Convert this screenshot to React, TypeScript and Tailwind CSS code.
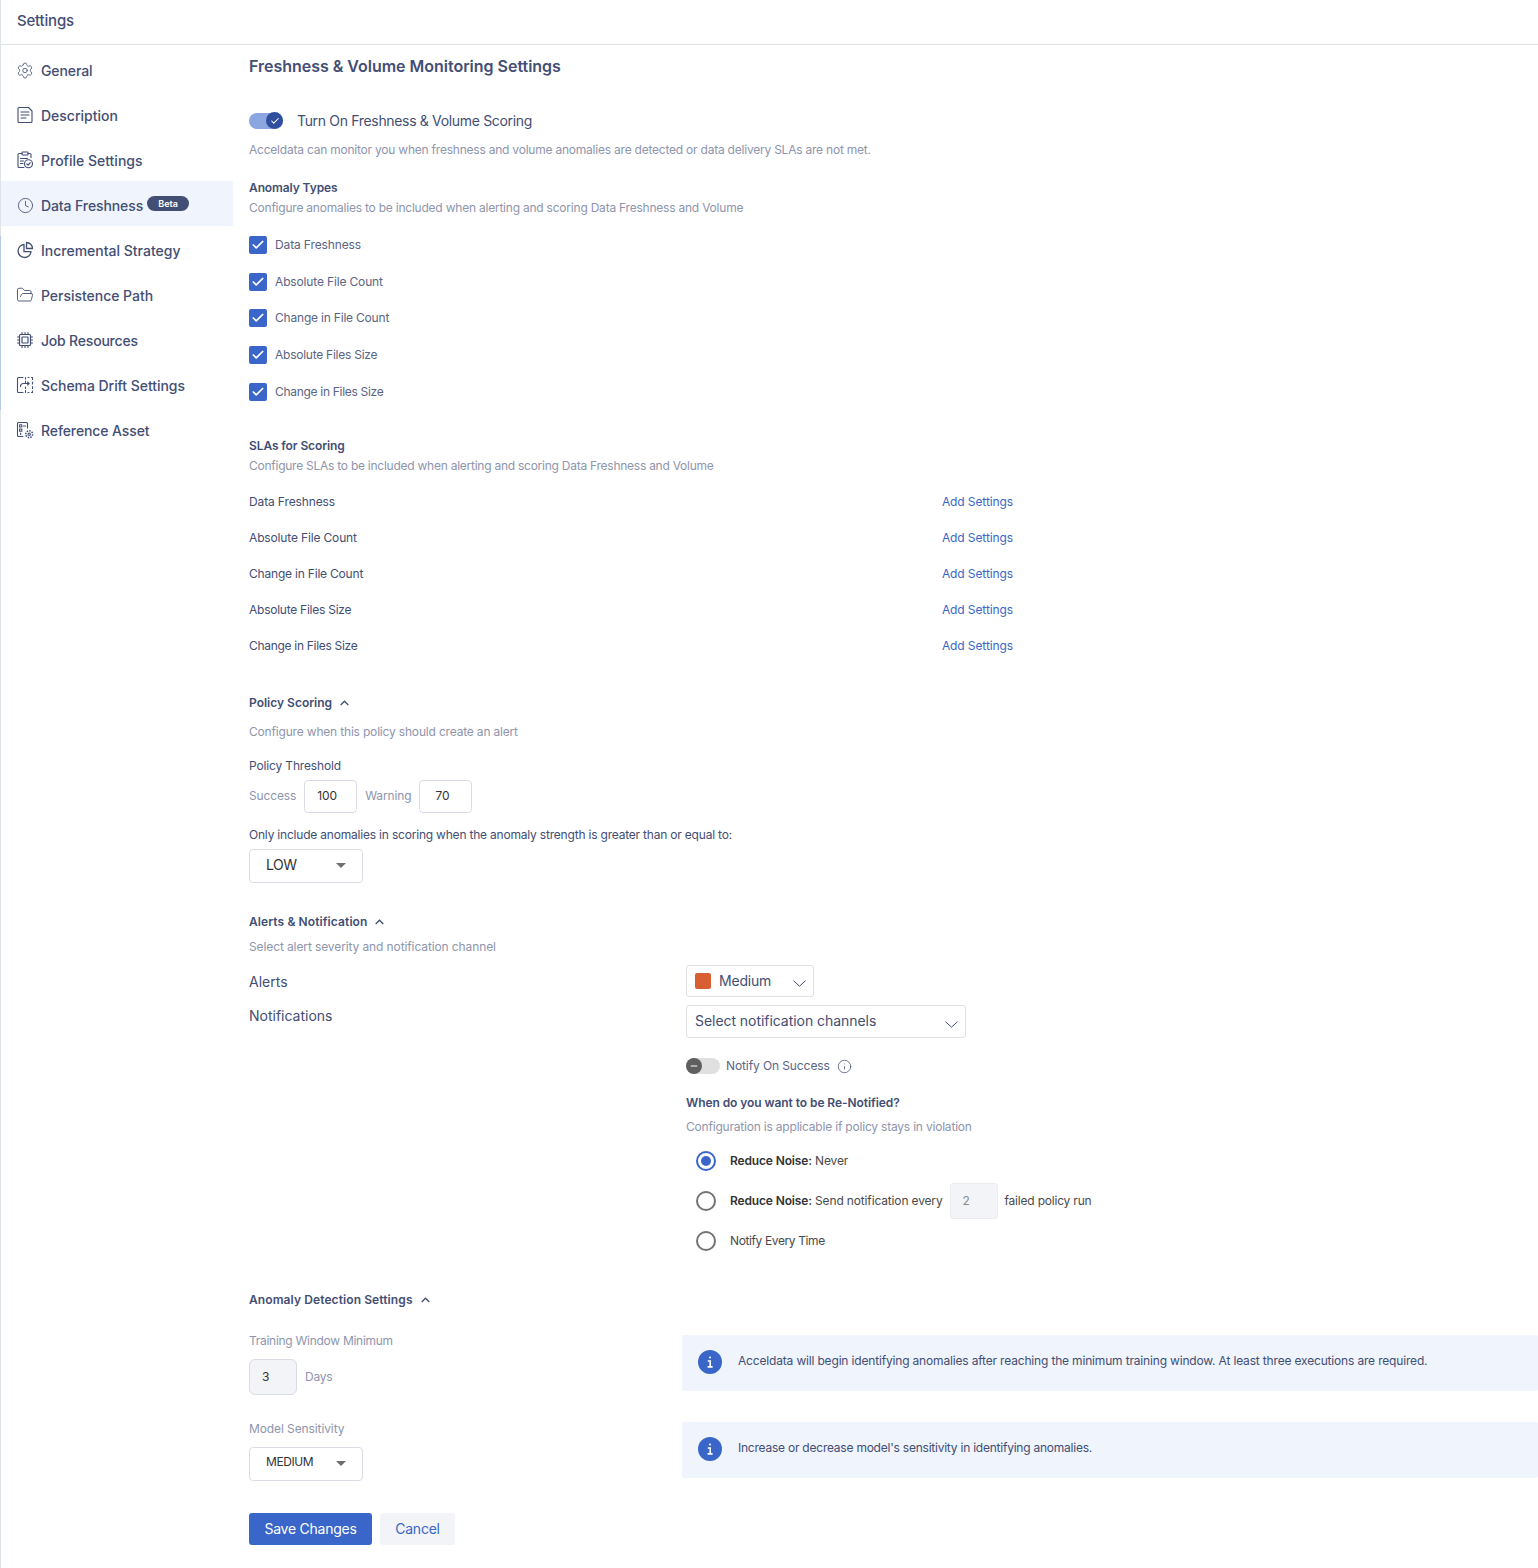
import React from "react";
import { Settings, Clock, FolderOpen, ChevronDown, Check, Info, Minus } from "lucide-react";

const Ic = ({ children }: { children: React.ReactNode }) => (
  <svg width="18" height="18" viewBox="0 0 18 18" fill="none" stroke="currentColor" strokeWidth="1.1" strokeLinecap="round" strokeLinejoin="round">{children}</svg>
);

const DescIcon = () => (
  <Ic>
    <path d="M3 1.5h9.5L16 5v10.5a1 1 0 0 1-1 1H3a1 1 0 0 1-1-1v-13a1 1 0 0 1 1-1z" />
    <path d="M5 6h8M5 9h8M5 12h5" />
  </Ic>
);
const ProfileIcon = () => (
  <Ic>
    <path d="M6 2.5H3a1 1 0 0 0-1 1v12a1 1 0 0 0 1 1h5M12 2.5h2a1 1 0 0 1 1 1v3" />
    <rect x="6" y="1" width="6" height="3" rx="0.7" />
    <path d="M4.5 7.5h7M4.5 10h3M4.5 12.5h2.5" />
    <circle cx="12.5" cy="12.8" r="4" />
    <path d="M10.8 12.9l1.3 1.3 2.2-2.6" />
  </Ic>
);
const PieIcon = () => (
  <Ic>
    <path d="M8 3.5a6.5 6.5 0 1 0 7 7.2H8z" strokeWidth="1.3" />
    <path d="M10.5 1.5a6 6 0 0 1 6 6h-6z" strokeWidth="1.3" />
  </Ic>
);
const CpuIcon = () => (
  <Ic>
    <rect x="3.5" y="3.5" width="11" height="11" rx="1" strokeWidth="1.2" />
    <rect x="6" y="6" width="6" height="6" rx="0.4" strokeWidth="1.2" />
    <path d="M6 1.5v2M9 1.5v2M12 1.5v2M6 14.5v2M9 14.5v2M12 14.5v2M1.5 6h2M1.5 9h2M1.5 12h2M14.5 6h2M14.5 9h2M14.5 12h2" />
  </Ic>
);
const DriftIcon = () => (
  <Ic>
    <path d="M7 1.5H2.5a1 1 0 0 0-1 1v13a1 1 0 0 0 1 1H7" />
    <path d="M9.5 1.5v1.5M9.5 5v1.5M9.5 11v1.5M9.5 14.5v2M12 1.5h1M15.5 1.5h1v2M16.5 6v2M16.5 10.5v2M16.5 15v1.5h-1M12 16.5h1" />
    <path d="M4.5 10.5c0-2 1-3 3-3h5.5M11.5 6l1.7 1.5-1.7 1.5" />
  </Ic>
);
const RefIcon = () => (
  <Ic>
    <path d="M7 15.5H2.5a1 1 0 0 1-1-1v-12a1 1 0 0 1 1-1h8a1 1 0 0 1 1 1V7" />
    <rect x="3.6" y="3.8" width="2.2" height="2.2" />
    <rect x="3.6" y="8" width="2.2" height="2.2" />
    <path d="M7.5 5h2M4.7 12v1.5" />
    <circle cx="13.2" cy="13.2" r="1.2" />
    <circle cx="13.2" cy="13.2" r="3.4" strokeDasharray="1.5 1.1" strokeWidth="1.5" strokeLinecap="butt" />
  </Ic>
);

const NAV: [string, React.ReactNode, string][] = [
  ["General", <Settings size={19} strokeWidth={1.1} />, "tracking-[-0.1px]"],
  ["Description", <DescIcon />, "tracking-normal"],
  ["Profile Settings", <ProfileIcon />, "tracking-normal"],
  ["Data Freshness", <Clock size={17} strokeWidth={1.2} />, "tracking-[-0.1px]"],
  ["Incremental Strategy", <PieIcon />, "tracking-normal"],
  ["Persistence Path", <FolderOpen size={18} strokeWidth={1.2} />, "tracking-[-0.03px]"],
  ["Job Resources", <CpuIcon />, "tracking-[-0.2px]"],
  ["Schema Drift Settings", <DriftIcon />, "tracking-[-0.05px]"],
  ["Reference Asset", <RefIcon />, "tracking-[-0.1px]"],
];

const CHECKS: [string, string, string][] = [
  ["Data Freshness", "mt-[20px]", "tracking-[-0.13px]"],
  ["Absolute File Count", "mt-[19px]", "tracking-[-0.15px]"],
  ["Change in File Count", "mt-[18px]", "tracking-[-0.2px]"],
  ["Absolute Files Size", "mt-[19px]", "tracking-[-0.25px]"],
  ["Change in Files Size", "mt-[19px]", "tracking-[-0.3px]"],
];

const Caret = () => (
  <span className="block mb-[2px] w-0 h-0 border-x-[5px] border-x-transparent border-t-[5px] border-t-[#6f6f6f]" />
);

const Up = () => (
  <svg width="9" height="6" viewBox="0 0 9 6" fill="none" stroke="currentColor" strokeWidth="1.3" className="shrink-0"><path d="M0.7 5L4.5 1.2 8.3 5" /></svg>
);
const Down = () => (
  <svg width="13" height="7" viewBox="0 0 13 7" fill="none" stroke="currentColor" strokeWidth="1" className="shrink-0 mt-[5px]"><path d="M0.5 0.7L6.5 6.2 12.5 0.7" /></svg>
);

const Radio = ({ on }: { on?: boolean }) => (
  <span className={`w-[20px] h-[20px] rounded-full border-2 flex items-center justify-center shrink-0 ${on ? "border-[#3a66c9]" : "border-[#737373]"}`}>
    {on && <span className="w-[10px] h-[10px] rounded-full bg-[#3a66c9]" />}
  </span>
);

const InfoDot = () => (
  <span className="w-[24px] h-[24px] rounded-full bg-[#3a66c9] flex items-center justify-center text-white shrink-0">
    <svg width="14" height="14" viewBox="0 0 14 14" fill="none" stroke="currentColor" strokeWidth="1.6"><circle cx="7" cy="2.4" r="1" fill="currentColor" stroke="none" /><path d="M4.8 6h2.4v5.6M4.6 11.9h5" /></svg>
  </span>
);

export default function App() {
  return (
    <div className="relative w-[1538px] h-[1568px] bg-white border-l border-[#dfe3ea] text-[#434e74] text-[12px] tracking-[-0.2px]" style={{ fontFamily: "Inter, 'Open Sans', sans-serif" }}>
      <div className="absolute -left-px top-[236px] w-px h-[174px] bg-[#b7c8ea]" />
      <header className="h-[45px] border-b border-[#dfe1e6] pl-[16px] flex items-center text-[15px] font-medium pb-[1px] tracking-[-0.2px]">Settings</header>
      <div className="flex">
        <nav className="w-[232px] shrink-0 flex flex-col">
          {NAV.map(([label, icon, tr], i) => (
            <div key={label} className={`h-[45px] pl-[15px] pt-[3px] flex items-center gap-[7px] text-[14px] font-medium ${tr} ${i === 3 ? "bg-[#eff4fd]" : ""} ${i === 0 ? "mt-px" : ""}`}>
              <span className="w-[18px] h-[18px] flex items-center justify-center shrink-0">{icon}</span>
              <span>{label}</span>
              {i === 3 && <span className="ml-[-3px] -mt-[3px] h-[15px] w-[42px] rounded-full bg-[#434e74] text-white text-[9px] font-semibold flex items-center justify-center tracking-normal">Beta</span>}
            </div>
          ))}
        </nav>

        <main className="flex-1 pl-[16px] pt-[9px]">
          <h1 className="text-[16px] leading-[24px] font-semibold tracking-[-0.02px]">Freshness &amp; Volume Monitoring Settings</h1>

          <div className="mt-[32px] flex items-center h-[22px]">
            <span className="relative w-[34px] h-[16px] rounded-full bg-[#8ca6e2]">
              <span className="absolute left-[17px] -top-px w-[17px] h-[17px] rounded-full bg-[#2f4f9e] text-white flex items-center justify-center"><Check size={10} strokeWidth={2.5} /></span>
            </span>
            <span className="ml-[14px] text-[14px] tracking-[-0.33px] pb-[1px]">Turn On Freshness &amp; Volume Scoring</span>
          </div>
          <p className="mt-[10px] leading-[16px] text-[#8e95ad] tracking-[-0.22px]">Acceldata can monitor you when freshness and volume anomalies are detected or data delivery SLAs are not met.</p>

          <h2 className="mt-[22px] leading-[16px] font-semibold tracking-[-0.1px]">Anomaly Types</h2>
          <p className="mt-[4px] leading-[16px] text-[#8e95ad] tracking-[-0.22px]">Configure anomalies to be included when alerting and scoring Data Freshness and Volume</p>

          {CHECKS.map(([c, m, tr]) => (
            <div key={c} className={`${m} h-[18px] flex items-center gap-[8px]`}>
              <span className="w-[18px] h-[18px] rounded-[2px] bg-[#3a66c9] text-white flex items-center justify-center"><Check size={14} strokeWidth={3} /></span>
              <span className={`text-[#5a6484] ${tr}`}>{c}</span>
            </div>
          ))}

          <h2 className="mt-[37px] leading-[16px] font-semibold tracking-[-0.1px]">SLAs for Scoring</h2>
          <p className="mt-[4px] leading-[16px] text-[#8e95ad] tracking-[-0.25px]">Configure SLAs to be included when alerting and scoring Data Freshness and Volume</p>
          <div className="mt-[20px] w-[764px] flex flex-col gap-[20px]">
            {CHECKS.map(([s, , tr]) => (
              <div key={s} className="h-[16px] leading-[16px] flex justify-between">
                <span className={tr}>{s}</span>
                <span className="text-[#3a66c9] tracking-[-0.1px]">Add Settings</span>
              </div>
            ))}
          </div>

          <h2 className="mt-[41px] h-[16px] leading-[16px] font-semibold flex items-center gap-[8px] tracking-normal">Policy Scoring <Up /></h2>
          <p className="mt-[13px] leading-[16px] text-[#8e95ad] tracking-[-0.18px]">Configure when this policy should create an alert</p>
          <p className="mt-[18px] leading-[16px] tracking-[-0.15px]">Policy Threshold</p>
          <div className="mt-[6px] flex items-center h-[33px] tracking-[-0.13px]">
            <span className="text-[#8e95ad] pb-[2px]">Success</span>
            <span className="ml-[8px] w-[53px] h-[33px] border border-[#d9dce6] rounded-[4px] pl-[12px] pb-[2px] flex items-center text-[#333]">100</span>
            <span className="ml-[8px] text-[#8e95ad] pb-[2px]">Warning</span>
            <span className="ml-[8px] w-[53px] h-[33px] border border-[#d9dce6] rounded-[4px] pl-[15px] pb-[2px] flex items-center text-[#333]">70</span>
          </div>
          <p className="mt-[14px] leading-[16px]">Only include anomalies in scoring when the anomaly strength is greater than or equal to:</p>
          <div className="mt-[6px] w-[114px] h-[34px] border border-[#d9dce6] rounded-[4px] pl-[16px] pr-[16px] flex items-center justify-between text-[14px] text-[#333] tracking-[-0.5px]"><span className="pb-[4px]">LOW</span><Caret /></div>

          <h2 className="mt-[31px] h-[16px] leading-[16px] font-semibold flex items-center gap-[8px] tracking-[0.1px]">Alerts &amp; Notification <Up /></h2>
          <p className="mt-[9px] leading-[16px] text-[#8e95ad] tracking-[-0.11px]">Select alert severity and notification channel</p>

          <div className="mt-[10px] flex">
            <div className="w-[437px] shrink-0 text-[14px] pt-[7px] tracking-normal">
              <p className="leading-[20px]">Alerts</p>
              <p className="mt-[14px] leading-[20px]">Notifications</p>
            </div>
            <div>
              <div className="w-[128px] h-[32px] border border-[#dfe1e6] rounded-[3px] pl-[8px] pr-[7px] flex items-center text-[14px]">
                <span className="w-[16px] h-[16px] rounded-[2px] bg-[#d75f33]" />
                <span className="ml-[8px] flex-1 pb-[2px]">Medium</span>
                <Down />
              </div>
              <div className="mt-[8px] w-[280px] h-[33px] border border-[#dfe1e6] rounded-[3px] pl-[8px] pr-[7px] flex items-center justify-between text-[14px] tracking-[-0.05px]">
                <span className="pb-[2px]">Select notification channels</span><Down />
              </div>
              <div className="mt-[20px] h-[16px] flex items-center tracking-[-0.1px]">
                <span className="relative w-[34px] h-[16px] rounded-full bg-[#e0e0e0]">
                  <span className="absolute left-0 top-0 w-[16px] h-[16px] rounded-full bg-[#5f5f5f] text-white flex items-center justify-center"><Minus size={10} strokeWidth={2.5} /></span>
                </span>
                <span className="ml-[6px] text-[#5a6484]">Notify On Success</span>
                <Info size={15} strokeWidth={1.2} className="ml-[7px]" />
              </div>
              <p className="mt-[21px] leading-[16px] font-semibold tracking-[-0.07px]">When do you want to be Re-Notified?</p>
              <p className="mt-[8px] leading-[16px] text-[#8e95ad]">Configuration is applicable if policy stays in violation</p>
              <div className="mt-[16px] ml-[10px] h-[20px] flex items-center gap-[14px] text-[#4a4a4a] tracking-[-0.15px]">
                <Radio on />
                <span><b className="font-semibold text-[#333]">Reduce Noise:</b> Never</span>
              </div>
              <div className="mt-[12px] ml-[10px] h-[36px] flex items-center text-[#4a4a4a] tracking-[-0.15px]">
                <Radio />
                <span className="ml-[14px]"><b className="font-semibold text-[#333]">Reduce Noise:</b> Send notification every</span>
                <span className="ml-[7px] w-[48px] h-[36px] bg-[#f3f4f7] border border-[#ebecf0] rounded-[3px] pl-[12px] flex items-center text-[#8a8a8a]">2</span>
                <span className="ml-[7px] tracking-[-0.2px]">failed policy run</span>
              </div>
              <div className="mt-[12px] ml-[10px] h-[20px] flex items-center gap-[14px] text-[#4a4a4a] tracking-[-0.38px]">
                <Radio />
                <span>Notify Every Time</span>
              </div>
            </div>
          </div>

          <h2 className="mt-[41px] h-[16px] leading-[16px] font-semibold flex items-center gap-[8px] tracking-[0.1px]">Anomaly Detection Settings <Up /></h2>

          <div className="mt-[27px] flex">
            <div className="w-[433px] shrink-0">
              <p className="mt-[-2px] leading-[16px] text-[#8e95ad] tracking-[-0.28px]">Training Window Minimum</p>
              <div className="mt-[10px] flex items-center gap-[8px]">
                <span className="w-[48px] h-[36px] bg-[#f3f4f7] border border-[#d9dce6] rounded-[6px] pl-[12px] flex items-center text-[#333]">3</span>
                <span className="text-[#8e95ad]">Days</span>
              </div>
            </div>
            <div className="w-[856px] h-[56px] bg-[#eff4fd] rounded-[2px] pl-[16px] pb-[2px] flex items-center gap-[16px]"><InfoDot /><span className="pb-[2px] tracking-[-0.17px]">Acceldata will begin identifying anomalies after reaching the minimum training window. At least three executions are required.</span></div>
          </div>
          <div className="mt-[27px] flex">
            <div className="w-[433px] shrink-0">
              <p className="-mt-px leading-[16px] text-[#8e95ad] tracking-[-0.1px]">Model Sensitivity</p>
              <div className="mt-[10px] w-[114px] h-[34px] border border-[#d9dce6] rounded-[4px] pl-[16px] pr-[16px] flex items-center justify-between text-[#333] tracking-[-0.4px]"><span className="pb-[4px]">MEDIUM</span><Caret /></div>
            </div>
            <div className="w-[856px] h-[56px] bg-[#eff4fd] rounded-[2px] pl-[16px] pb-[2px] flex items-center gap-[16px]"><InfoDot /><span className="pb-[2px] tracking-[-0.23px]">Increase or decrease model's sensitivity in identifying anomalies.</span></div>
          </div>

          <div className="mt-[32px] flex gap-[8px] text-[14px] tracking-[-0.25px]">
            <button className="w-[123px] h-[32px] rounded-[3px] bg-[#3a66c9] text-white pb-[2px]">Save Changes</button>
            <button className="w-[75px] h-[32px] rounded-[3px] bg-[#f2f4f8] text-[#3a66c9] pb-[2px]">Cancel</button>
          </div>
        </main>
      </div>
    </div>
  );
}
